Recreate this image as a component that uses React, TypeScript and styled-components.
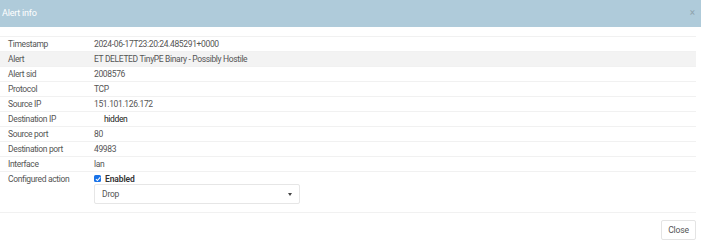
import React from 'react';
import styled, { createGlobalStyle } from 'styled-components';

const GlobalStyle = createGlobalStyle`
  html, body {
    margin: 0;
    padding: 0;
    background: #fff;
  }
  body {
    font-family: Roboto, "Liberation Sans", sans-serif;
    font-size: 8.5px;
    color: #555;
  }
`;

const Modal = styled.div`
  width: 701px;
  height: 247px;
  display: flex;
  flex-direction: column;
  background: #fff;
`;

const Header = styled.div`
  height: 27px;
  flex: none;
  display: flex;
  align-items: center;
  justify-content: space-between;
  padding: 0 6px 1px 2px;
  box-sizing: border-box;
  background: #afcbda;
`;

const Title = styled.div`
  color: #fff;
  font-size: 9px;
  letter-spacing: -0.2px;
`;

const CloseX = styled.div`
  color: #8fa3ae;
  font-size: 10px;
  line-height: 1;
`;

const Body = styled.div`
  padding: 9px 5px 0 0;
`;

const Table = styled.table`
  width: 100%;
  border-collapse: collapse;
`;

const Row = styled.tr<{ $active?: boolean }>`
  background: ${(p) => (p.$active ? '#f3f3f3' : 'transparent')};
  border-top: 1px solid #f1f1f1;
  border-bottom: 1px solid #f1f1f1;
`;

const Label = styled.td`
  width: 86px;
  padding: 1px 0 1px 8px;
  line-height: 12px;
  vertical-align: top;
  letter-spacing: -0.35px;
  white-space: nowrap;
`;

const Value = styled.td<{ $indent?: boolean; $dark?: boolean }>`
  padding: 1px 0 1px ${(p) => (p.$indent ? '10px' : '0')};
  line-height: 12px;
  letter-spacing: -0.35px;
  color: ${(p) => (p.$dark ? '#222' : '#555')};
`;

const ActionCell = styled.td`
  padding: 1px 0 8px 0;
  vertical-align: top;
`;

const CheckLine = styled.label`
  display: flex;
  align-items: center;
  gap: 4px;
  height: 11px;
  font-weight: 600;
  color: #333;
  letter-spacing: -0.1px;
`;

const Check = styled.span`
  width: 7px;
  height: 7px;
  border-radius: 1.5px;
  background: #1a73e8;
  display: flex;
  align-items: center;
  justify-content: center;
`;

const Select = styled.div`
  width: 206px;
  height: 20px;
  box-sizing: border-box;
  border: 1px solid #e6e6e6;
  border-radius: 2px;
  display: flex;
  align-items: center;
  justify-content: space-between;
  padding: 0 7px 0 7px;
  letter-spacing: -0.2px;
`;

const Caret = styled.span`
  width: 0;
  height: 0;
  border-left: 2.5px solid transparent;
  border-right: 2.5px solid transparent;
  border-top: 3px solid #444;
`;

const Footer = styled.div`
  flex: 1;
  display: flex;
  align-items: center;
  justify-content: flex-end;
  padding: 0 5px 0 0;
`;

const Button = styled.button`
  height: 20px;
  width: 35px;
  padding: 0;
  font-family: inherit;
  font-size: 8.6px;
  letter-spacing: -0.2px;
  color: #555;
  background: #fff;
  border: 1px solid #e4e4e4;
  border-radius: 2px;
`;

const rows: { label: string; value: string; indent?: boolean; dark?: boolean; active?: boolean }[] = [
  { label: 'Timestamp', value: '2024-06-17T23:20:24.485291+0000' },
  { label: 'Alert', value: 'ET DELETED TinyPE Binary - Possibly Hostile', active: true },
  { label: 'Alert sid', value: '2008576' },
  { label: 'Protocol', value: 'TCP' },
  { label: 'Source IP', value: '151.101.126.172' },
  { label: 'Destination IP', value: 'hidden', indent: true, dark: true },
  { label: 'Source port', value: '80' },
  { label: 'Destination port', value: '49983' },
  { label: 'Interface', value: 'lan' },
];

export default function App() {
  return (
    <>
      <GlobalStyle />
      <Modal>
        <Header>
          <Title>Alert info</Title>
          <CloseX>×</CloseX>
        </Header>
        <Body>
          <Table>
            <tbody>
              {rows.map((r) => (
                <Row key={r.label} $active={r.active}>
                  <Label>{r.label}</Label>
                  <Value $indent={r.indent} $dark={r.dark}>{r.value}</Value>
                </Row>
              ))}
              <Row>
                <Label>Configured action</Label>
                <ActionCell>
                  <CheckLine>
                    <Check>
                      <svg width="6" height="6" viewBox="0 0 10 10">
                        <path d="M1.5 5.2 L4 7.6 L8.6 2.4" fill="none" stroke="#fff" strokeWidth="1.8" />
                      </svg>
                    </Check>
                    Enabled
                  </CheckLine>
                  <Select>
                    <span>Drop</span>
                    <Caret />
                  </Select>
                </ActionCell>
              </Row>
            </tbody>
          </Table>
        </Body>
        <Footer>
          <Button>Close</Button>
        </Footer>
      </Modal>
    </>
  );
}
